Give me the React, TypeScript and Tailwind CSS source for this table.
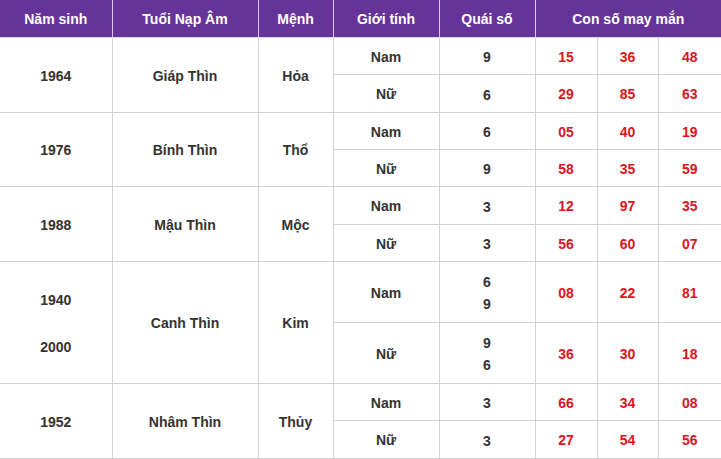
import * as React from "react"

type Sub = { gender: string; quai: string[]; nums: string[] }
type Group = { years: string[]; napAm: string; menh: string; heights: [number, number]; subs: [Sub, Sub] }

const groups: Group[] = [
  {
    years: ["1964"], napAm: "Giáp Thìn", menh: "Hỏa", heights: [37, 38],
    subs: [
      { gender: "Nam", quai: ["9"], nums: ["15", "36", "48"] },
      { gender: "Nữ", quai: ["6"], nums: ["29", "85", "63"] },
    ],
  },
  {
    years: ["1976"], napAm: "Bính Thìn", menh: "Thổ", heights: [37, 37],
    subs: [
      { gender: "Nam", quai: ["6"], nums: ["05", "40", "19"] },
      { gender: "Nữ", quai: ["9"], nums: ["58", "35", "59"] },
    ],
  },
  {
    years: ["1988"], napAm: "Mậu Thìn", menh: "Mộc", heights: [38, 37],
    subs: [
      { gender: "Nam", quai: ["3"], nums: ["12", "97", "35"] },
      { gender: "Nữ", quai: ["3"], nums: ["56", "60", "07"] },
    ],
  },
  {
    years: ["1940", "2000"], napAm: "Canh Thìn", menh: "Kim", heights: [61, 61],
    subs: [
      { gender: "Nam", quai: ["6", "9"], nums: ["08", "22", "81"] },
      { gender: "Nữ", quai: ["9", "6"], nums: ["36", "30", "18"] },
    ],
  },
  {
    years: ["1952"], napAm: "Nhâm Thìn", menh: "Thủy", heights: [37, 38],
    subs: [
      { gender: "Nam", quai: ["3"], nums: ["66", "34", "08"] },
      { gender: "Nữ", quai: ["3"], nums: ["27", "54", "56"] },
    ],
  },
]

const td = "border border-[#d2d2d2] text-center align-middle p-0 pt-[3px]"
const th = "border-x border-[#d9c8ea] border-b border-b-[#e3d6f0] bg-[#663399] text-white text-center font-bold p-0 pt-[2px]"

export default function App() {
  return (
    <div className="w-[721px] h-[459px] overflow-hidden bg-white font-['Liberation_Sans',Arial,sans-serif] text-[14px] font-bold text-[#333]">
      <table className="table-fixed border-collapse w-[721px]">
        <colgroup>
          <col className="w-[112px]" />
          <col className="w-[146px]" />
          <col className="w-[75px]" />
          <col className="w-[106px]" />
          <col className="w-[96px]" />
          <col className="w-[62px]" />
          <col className="w-[61px]" />
          <col className="w-[63px]" />
        </colgroup>
        <thead>
          <tr className="h-[37px]">
            <th className={`${th} border-l-0`}>Năm sinh</th>
            <th className={th}>Tuổi Nạp Âm</th>
            <th className={th}>Mệnh</th>
            <th className={th}>Giới tính</th>
            <th className={th}>Quái số</th>
            <th className={`${th} border-r-0`} colSpan={3}>Con số may mắn</th>
          </tr>
        </thead>
        <tbody>
          {groups.map((g) =>
            g.subs.map((s, i) => (
              <tr key={g.napAm + s.gender} style={{ height: g.heights[i] }}>
                {i === 0 && (
                  <>
                    <td className={`${td} border-l-0`} rowSpan={2}>
                      {g.years.length > 1 ? (
                        <div className="flex flex-col gap-[23px] leading-[24px]">
                          {g.years.map((y) => (
                            <span key={y}>{y}</span>
                          ))}
                        </div>
                      ) : (
                        g.years[0]
                      )}
                    </td>
                    <td className={td} rowSpan={2}>{g.napAm}</td>
                    <td className={td} rowSpan={2}>{g.menh}</td>
                  </>
                )}
                <td className={td}>{s.gender}</td>
                <td className={td}>
                  <div className="flex flex-col leading-[22px]">
                    {s.quai.map((q, k) => (
                      <span key={k}>{q}</span>
                    ))}
                  </div>
                </td>
                {s.nums.map((n, k) => (
                  <td key={k} className={`${td} text-[#e0141c] ${k === 2 ? "border-r-0" : ""}`}>
                    {n}
                  </td>
                ))}
              </tr>
            ))
          )}
        </tbody>
      </table>
    </div>
  )
}
